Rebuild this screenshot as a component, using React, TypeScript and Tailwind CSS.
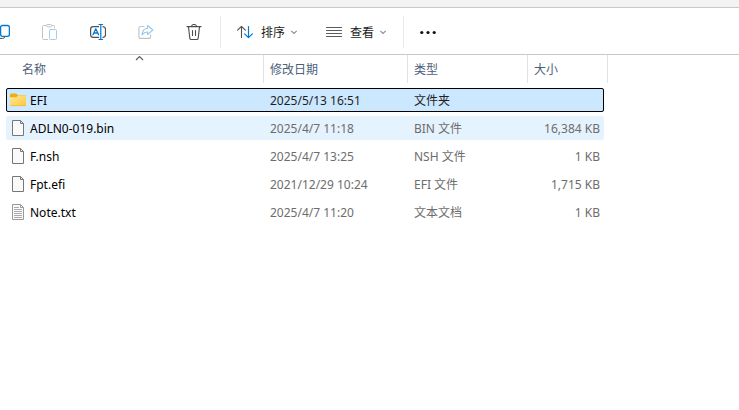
import type { ReactNode } from "react";

type Kind = "folder" | "file" | "text";

interface Entry {
  name: string;
  date: string;
  type: string;
  size: string;
  kind: Kind;
  state?: "selected" | "hover";
}

const entries: Entry[] = [
  { name: "EFI", date: "2025/5/13 16:51", type: "文件夹", size: "", kind: "folder", state: "selected" },
  { name: "ADLN0-019.bin", date: "2025/4/7 11:18", type: "BIN 文件", size: "16,384 KB", kind: "file", state: "hover" },
  { name: "F.nsh", date: "2025/4/7 13:25", type: "NSH 文件", size: "1 KB", kind: "file" },
  { name: "Fpt.efi", date: "2021/12/29 10:24", type: "EFI 文件", size: "1,715 KB", kind: "file" },
  { name: "Note.txt", date: "2025/4/7 11:20", type: "文本文档", size: "1 KB", kind: "text" },
];

const columns = "grid grid-cols-[258px_144px_120px_1fr] items-center";

function FolderIcon() {
  return (
    <svg className="block h-4 w-4 shrink-0" viewBox="0 0 16 16" aria-hidden="true">
      <defs>
        <linearGradient id="folderFront" x1="0" y1="0" x2="1" y2="1">
          <stop offset="0" stopColor="#ffe6a0" />
          <stop offset="1" stopColor="#fcc837" />
        </linearGradient>
      </defs>
      <path d="M0 3Q0 1.5 1.3 1.5H5.6Q6.5 1.5 7 2.2L7.8 3.3H15Q16 3.3 16 4.3V8H0Z" fill="#efae10" />
      <path d="M0 5.3H6.3L8.2 3.6H15Q16 3.6 16 4.6V13Q16 14 15 14H1Q0 14 0 13Z" fill="url(#folderFront)" />
      <path d="M.5 13.6H15.5" stroke="#edb92d" strokeWidth=".8" />
    </svg>
  );
}

function FileIcon({ lines }: { lines: boolean }) {
  return (
    <svg className="block h-4 w-4 shrink-0" viewBox="0 0 16 16" aria-hidden="true">
      <path
        d="M2.5 .5H10.5L13.5 3.5V15.5H2.5Z"
        fill="#fafafa"
        stroke={lines ? "#999999" : "#777777"}
      />
      <path d="M10.5 .5V3.5H13.5" fill="none" stroke={lines ? "#999999" : "#777777"} />
      {lines && (
        <path d="M4 3.5H9M4 5.5H12M4 7.5H12M4 9.5H12M4 11.5H12M4 13.5H12" stroke="#aaaaaa" />
      )}
    </svg>
  );
}

function Chevron() {
  return (
    <svg className="ml-[5px] block h-2 w-2" viewBox="0 0 8 8" fill="none" aria-hidden="true">
      <path d="M1.3 2.8L4 5.4L6.7 2.8" stroke="#8c8c8c" strokeWidth="1.1" />
    </svg>
  );
}

function ToolIcon({ children }: { children: ReactNode }) {
  return (
    <svg
      className="block h-4 w-4 shrink-0"
      viewBox="0 0 16 16"
      fill="none"
      strokeLinecap="round"
      strokeLinejoin="round"
      aria-hidden="true"
    >
      {children}
    </svg>
  );
}

function ToolButton({ label, disabled, children }: { label: string; disabled?: boolean; children: ReactNode }) {
  return (
    <button
      type="button"
      aria-label={label}
      disabled={disabled}
      className="flex h-8 w-12 shrink-0 items-center justify-center"
    >
      <ToolIcon>{children}</ToolIcon>
    </button>
  );
}

function Toolbar() {
  return (
    <div className="overflow-hidden border-y border-[#c9c9c2] bg-white">
      <div role="toolbar" aria-label="命令栏" className="-ml-[22px] flex h-[46px] items-center pt-0.5">
        <ToolButton label="复制">
          <path d="M5.5 3.5H4Q2.5 3.5 2.5 5V12Q2.5 14.4 5 14.4H8.5Q10.3 14.4 11 13.3" stroke="#4d4d4d" />
          <rect x="6.6" y="1.5" width="8.8" height="10.8" rx="1.8" stroke="#0078d4" strokeWidth="1.3" />
        </ToolButton>
        <ToolButton label="粘贴" disabled>
          <path d="M5.5 15.5H1.5Q.5 15.5 .5 14.5V2.5Q.5 1.5 1.5 1.5H4.4M9.5 1.5H11.5Q12.5 1.5 12.5 2.5V3.8" stroke="#c3c3c3" />
          <rect x="4.5" y=".5" width="5" height="2.3" rx="1.1" stroke="#c3c3c3" />
          <rect x="7.5" y="5.5" width="7" height="10" rx="1" stroke="#a0cdf0" />
        </ToolButton>
        <ToolButton label="重命名">
          <path d="M8.6 13.4H3.2Q.6 13.4 .6 10.8V5.2Q.6 2.6 3.2 2.6H8.6M13 2.6Q15.5 2.8 15.5 5.2V10.8Q15.5 13.2 13 13.4" stroke="#505050" strokeWidth="1.2" />
          <path d="M3 10.8L5.8 4.8L8.6 10.8M4 9H7.6" stroke="#0078d4" strokeWidth="1.3" />
          <path d="M9 .5H12.6M10.8 .5V15.5M9 15.5H12.6" stroke="#0078d4" strokeWidth="1.2" />
        </ToolButton>
        <ToolButton label="共享" disabled>
          <path d="M6 2.5H2.9Q.9 2.5 .9 4.5V12.4Q.9 14.4 2.9 14.4H10.6Q12.6 14.4 12.6 12.4V11" stroke="#c3c3c3" strokeWidth="1.1" />
          <path d="M9.5 1.5L14.9 6L9.5 10.5V8Q6.2 7.8 4 10.8Q4.5 4.8 9.5 4.2Z" stroke="#94c8f0" strokeWidth="1.1" />
        </ToolButton>
        <ToolButton label="删除">
          <path d="M1 2.6H15M5.5 2.4Q5.8 .5 8 .5T10.5 2.4M2.5 3L3.8 14.1Q3.9 15.5 5.3 15.5H10.7Q12.1 15.5 12.2 14.1L13.5 3" stroke="#4d4d4d" strokeWidth="1.1" />
          <path d="M6.5 6.5V11.5M9.5 6.5V11.5" stroke="#4d4d4d" strokeWidth="1.1" />
        </ToolButton>

        <div className="ml-0.5 h-8 w-px shrink-0 bg-[#e9e9e9]" />

        <button type="button" className="ml-1 flex h-8 shrink-0 items-center px-3">
          <ToolIcon>
            <path d="M4.5 13.5V2.5M.6 6.2L4.5 2.3L8.4 6.2" stroke="#505050" strokeWidth="1.1" />
            <path d="M11.5 2.5V13.5M7.6 9.8L11.5 13.7L15.4 9.8" stroke="#0078d4" strokeWidth="1.2" />
          </ToolIcon>
          <span className="ml-2 pt-0.5">排序</span>
          <Chevron />
        </button>
        <button type="button" className="ml-1 flex h-8 shrink-0 items-center px-3">
          <ToolIcon>
            <path d="M.5 3.5H15.5M.5 6.5H15.5M.5 9.5H15.5M.5 12.5H15.5" stroke="#5a5a5a" />
          </ToolIcon>
          <span className="ml-2 pt-0.5">查看</span>
          <Chevron />
        </button>

        <div className="ml-1 h-8 w-px shrink-0 bg-[#e9e9e9]" />

        <button type="button" aria-label="查看更多" className="ml-1 flex h-8 shrink-0 items-center px-3">
          <ToolIcon>
            <circle cx="1.8" cy="8.5" r="1.6" fill="#111111" />
            <circle cx="8" cy="8.5" r="1.6" fill="#111111" />
            <circle cx="14.2" cy="8.5" r="1.6" fill="#111111" />
          </ToolIcon>
        </button>
      </div>
    </div>
  );
}

const headCell = "flex h-7 items-center border-r border-[#e2e2e2] pt-0.5 font-normal text-[#4c607a]";

function Row({ entry }: { entry: Entry }) {
  const selected = entry.state === "selected";
  const tone = selected
    ? "bg-[#cce8ff] outline-1 -outline-offset-1 outline-black text-[#1f1f1f]"
    : entry.state === "hover"
      ? "bg-[#e5f3ff] text-[#6d6d6d]"
      : "text-[#6d6d6d]";
  return (
    <tr aria-selected={selected} className={`${columns} h-6 w-[598px] rounded-xs ${tone}`}>
      <td className="flex items-center gap-1 pl-1 text-black">
        {entry.kind === "folder" ? <FolderIcon /> : <FileIcon lines={entry.kind === "text"} />}
        <span className="pt-0.5">{entry.name}</span>
      </td>
      <td className="pt-0.5 pl-1.5">{entry.date}</td>
      <td className="pt-0.5 pl-1.5">{entry.type}</td>
      <td className="pt-0.5 pr-1 text-right">{entry.size}</td>
    </tr>
  );
}

export default function App() {
  return (
    <div className="min-h-screen overflow-hidden bg-white font-['Noto_Sans','Noto_Sans_CJK_SC',sans-serif] text-xs text-[#1a1a1a]">
      <div className="h-[7px] bg-[#f3f3f3]" />
      <Toolbar />
      <table className="block pl-1.5">
        <thead className="block">
          <tr className={`${columns} w-[602px]`}>
            <th scope="col" aria-sort="ascending" className={`${headCell} relative pl-4`}>
              名称
              <svg className="absolute top-0 left-[129px] h-1.5 w-2.5" viewBox="0 0 10 6" fill="none" aria-hidden="true">
                <path d="M1 5L4.5 1.5L8 5" stroke="#606060" strokeWidth="1.2" />
              </svg>
            </th>
            <th scope="col" className={`${headCell} pl-1.5`}>修改日期</th>
            <th scope="col" className={`${headCell} pl-1.5`}>类型</th>
            <th scope="col" className={`${headCell} pl-1.5`}>大小</th>
          </tr>
        </thead>
        <tbody className="flex flex-col gap-1 pt-[5px]">
          {entries.map((entry) => (
            <Row key={entry.name} entry={entry} />
          ))}
        </tbody>
      </table>
    </div>
  );
}
